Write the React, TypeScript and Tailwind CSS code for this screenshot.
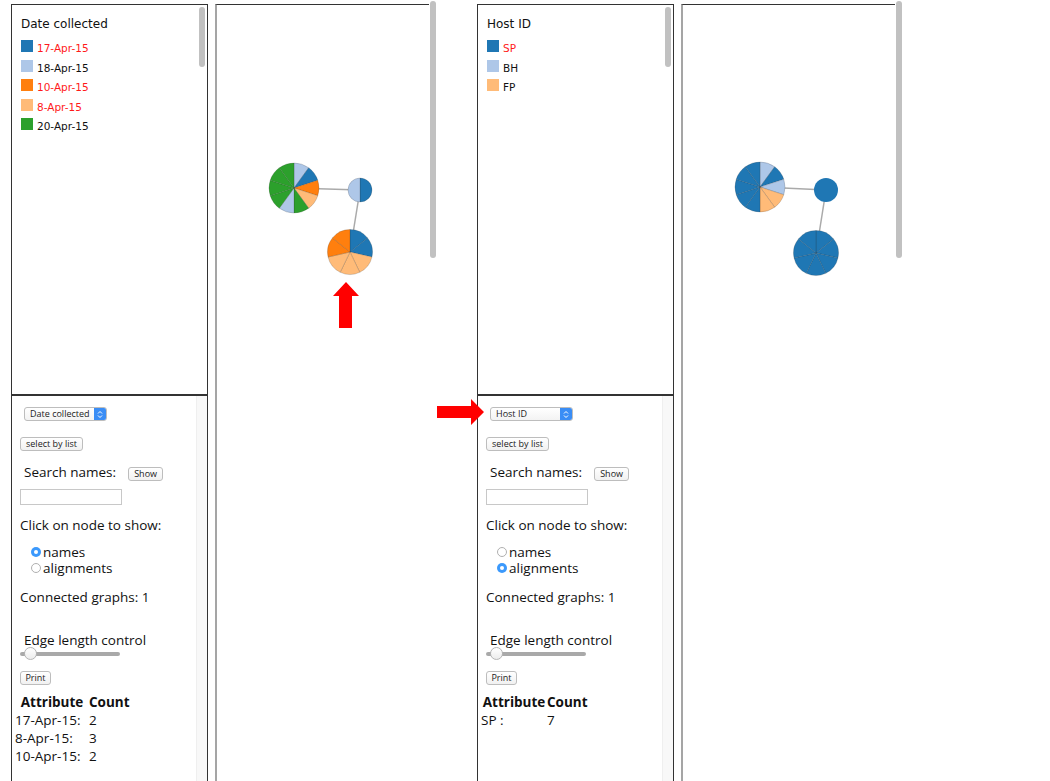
import React from "react";

const C = {
  blue: "#1f77b4",
  lightBlue: "#aec7e8",
  orange: "#ff7f0e",
  lightOrange: "#ffbb78",
  green: "#2ca02c",
};

type LegendItem = { label: string; color: string; red?: boolean };

type Pie = { cx: number; cy: number; r: number; colors: string[] };

function slicePath(cx: number, cy: number, r: number, a0: number, a1: number) {
  const x0 = cx + r * Math.sin(a0);
  const y0 = cy - r * Math.cos(a0);
  const x1 = cx + r * Math.sin(a1);
  const y1 = cy - r * Math.cos(a1);
  const large = a1 - a0 > Math.PI ? 1 : 0;
  return `M${cx},${cy} L${x0},${y0} A${r},${r} 0 ${large} 1 ${x1},${y1} Z`;
}

function PieNode({ cx, cy, r, colors }: Pie) {
  if (colors.length === 1) return <circle cx={cx} cy={cy} r={r} fill={colors[0]} />;
  const step = (Math.PI * 2) / colors.length;
  return (
    <g>
      {colors.map((c, i) => (
        <path
          key={i}
          d={slicePath(cx, cy, r, i * step, (i + 1) * step)}
          fill={c}
          stroke="rgba(40,40,40,0.3)"
          strokeWidth={0.6}
        />
      ))}
    </g>
  );
}

function Graph({ pies, arrow }: { pies: Pie[]; arrow?: boolean }) {
  const [a, b, c] = pies;
  return (
    <svg width="212" height="340" className="block">
      <line x1={a.cx} y1={a.cy} x2={b.cx} y2={b.cy} stroke="#aaa" strokeWidth={1.5} />
      <line x1={b.cx} y1={b.cy} x2={c.cx} y2={c.cy} stroke="#aaa" strokeWidth={1.5} />
      {pies.map((p, i) => (
        <PieNode key={i} {...p} />
      ))}
      {arrow ? <polygon points="129,277 142,291 135,291 135,323 122,323 122,291 116,291" fill="#ff0000" /> : null}
    </svg>
  );
}

function Btn({ children, w }: { children: React.ReactNode; w: string }) {
  return (
    <div
      className={`${w} flex h-[14px] items-center justify-center rounded-[3px] border border-[#bdbdbd] bg-gradient-to-b from-white to-[#f1f1f1] text-[9px] leading-[12px] text-[#222]`}
    >
      {children}
    </div>
  );
}

function Select({ label }: { label: string }) {
  return (
    <div className="flex h-[14px] w-[83px] rounded-[3px] border border-[#bdbdbd] bg-gradient-to-b from-white to-[#f3f3f3]">
      <div className="flex-1 pl-[5px] text-[9px] leading-[12px] text-[#222]">{label}</div>
      <div className="flex w-[12px] items-center justify-center rounded-r-[2px] bg-[#3a8df5]">
        <svg width="6" height="9" viewBox="0 0 6 9">
          <path d="M1,3.5 L3,1.5 L5,3.5 M1,5.5 L3,7.5 L5,5.5" fill="none" stroke="#fff" strokeWidth={1} />
        </svg>
      </div>
    </div>
  );
}

function Radio({ checked, label }: { checked: boolean; label: string }) {
  return (
    <div className="flex h-[16px] items-center">
      {checked ? (
        <div className="flex h-[10px] w-[10px] items-center justify-center rounded-full bg-[#3b99fc]">
          <div className="h-[4px] w-[4px] rounded-full bg-white" />
        </div>
      ) : (
        <div className="h-[10px] w-[10px] rounded-full border border-[#b0b0b0] bg-white" />
      )}
      <span className="ml-[2px]">{label}</span>
    </div>
  );
}

function Frame({
  title,
  legend,
  select,
  radio,
  rows,
  col1,
  pies,
  arrow,
}: {
  title: string;
  legend: LegendItem[];
  select: string;
  radio: "names" | "alignments";
  rows: [string, string][];
  col1: string;
  pies: Pie[];
  arrow?: boolean;
}) {
  return (
    <div className="flex h-full w-[437px] shrink-0">
      <div className="flex w-[429px] pl-[11px] pt-[4px]">
        <div className="flex w-[197px] flex-col">
          <div className="flex h-[391px] border border-[#333]">
            <div className="flex-1 pl-[9px] pt-[11px] font-['DejaVu_Sans',sans-serif]">
              <div className="h-[16px] text-[12px] leading-[16px] text-[#111]">{title}</div>
              <div className="mt-[4.5px]">
                {legend.map((it) => (
                  <div key={it.label} className="flex h-[19.5px] items-start">
                    <div className="mt-[3.5px] h-[12px] w-[12px]" style={{ background: it.color }} />
                    <span
                      className={`ml-[4px] mt-[4.5px] text-[10.5px] leading-[14px] ${it.red ? "text-[#ff1a1a]" : "text-[#111]"}`}
                    >
                      {it.label}
                    </span>
                  </div>
                ))}
              </div>
            </div>
            <div className="w-[8px] pt-[2px]">
              <div className="h-[60px] w-[6px] rounded-full bg-[#c1c1c1]" />
            </div>
          </div>
          <div className="flex flex-1 border-x border-t border-[#333]">
            <div className="flex-1 pt-[11px] text-[13.5px] leading-[16px] text-[#111]">
              <div className="ml-[12px]">
                <Select label={select} />
              </div>
              <div className="ml-[8px] mt-[16px]">
                <Btn w="w-[63px]">select by list</Btn>
              </div>
              <div className="ml-[12px] mt-[13px] flex items-start">
                <span className="h-[16px]">Search names:</span>
                <div className="ml-[12px] mt-[3px]">
                  <Btn w="w-[35px]">Show</Btn>
                </div>
              </div>
              <div className="ml-[8px] mt-[8px] h-[16px] w-[102px] border border-[#c8c8c8] bg-white" />
              <div className="ml-[8px] mt-[12px]">Click on node to show:</div>
              <div className="ml-[19px] mt-[11px]">
                <Radio checked={radio === "names"} label="names" />
                <Radio checked={radio === "alignments"} label="alignments" />
              </div>
              <div className="ml-[8px] mt-[13px]">Connected graphs: 1</div>
              <div className="ml-[12px] mt-[27px] h-[15px]">Edge length control</div>
              <div className="relative ml-[8px] flex h-[14px] w-[100px] items-center">
                <div className="h-[4px] w-full rounded-full bg-[#a9a9a9]" />
                <div className="absolute left-[4px] top-0 h-[13px] w-[13px] rounded-full border border-[#b5b5b5] bg-gradient-to-b from-white to-[#ececec]" />
              </div>
              <div className="ml-[8px] mt-[10px]">
                <Btn w="w-[31px]">Print</Btn>
              </div>
              <div className="ml-[3px] mt-[8px] leading-[18px]">
                <div className="flex font-bold">
                  <div className={`${col1} text-center`}>Attribute</div>
                  <div>Count</div>
                </div>
                {rows.map(([k, v]) => (
                  <div key={k} className="flex">
                    <div className={col1}>{k}</div>
                    <div>{v}</div>
                  </div>
                ))}
              </div>
            </div>
            <div className="w-[11px] border-l border-[#efefef] bg-[#f8f8f8]" />
          </div>
        </div>
        <div className="ml-[7px] flex-1 border-l-2 border-t border-l-[#a5a5a5] border-t-[#333]">
          <Graph pies={pies} arrow={arrow} />
        </div>
      </div>
      <div className="flex w-[8px] justify-center pt-[1px]">
        <div className="h-[257px] w-[6px] rounded-full bg-[#c1c1c1]" />
      </div>
    </div>
  );
}

export default function App() {
  const { blue: b, lightBlue: lb, orange: o, lightOrange: lo, green: g } = C;

  return (
    <div className="relative flex h-[781px] w-[1050px] overflow-hidden bg-white font-['Open_Sans',sans-serif]">
      <Frame
        title="Date collected"
        legend={[
          { label: "17-Apr-15", color: b, red: true },
          { label: "18-Apr-15", color: lb },
          { label: "10-Apr-15", color: o, red: true },
          { label: "8-Apr-15", color: lo, red: true },
          { label: "20-Apr-15", color: g },
        ]}
        select="Date collected"
        radio="names"
        col1="w-[74px]"
        rows={[
          ["17-Apr-15:", "2"],
          ["8-Apr-15:", "3"],
          ["10-Apr-15:", "2"],
        ]}
        pies={[
          { cx: 77, cy: 183, r: 25, colors: [lb, b, o, lo, g, lb, g, g, g, g] },
          { cx: 143, cy: 185, r: 12, colors: [b, lb] },
          { cx: 133, cy: 247, r: 22.5, colors: [b, b, lo, lo, lo, o, o] },
        ]}
        arrow
      />
      <div className="ml-[29px]">
        <Frame
          title="Host ID"
          legend={[
            { label: "SP", color: b, red: true },
            { label: "BH", color: lb },
            { label: "FP", color: lo },
          ]}
          select="Host ID"
          radio="alignments"
          col1="w-[66px]"
          rows={[["SP :", "7"]]}
          pies={[
            { cx: 77, cy: 182, r: 25, colors: [lb, b, lb, lo, lo, b, b, b, b, b] },
            { cx: 143, cy: 185, r: 12, colors: [b] },
            { cx: 133, cy: 248, r: 22.5, colors: [b, b, b, b, b, b, b] },
          ]}
        />
      </div>
      <svg width="50" height="30" className="absolute left-[437px] top-[398px]">
        <polygon points="0,8 34,8 34,1 47,14 34,27 34,20 0,20" fill="#ff0000" />
      </svg>
    </div>
  );
}
